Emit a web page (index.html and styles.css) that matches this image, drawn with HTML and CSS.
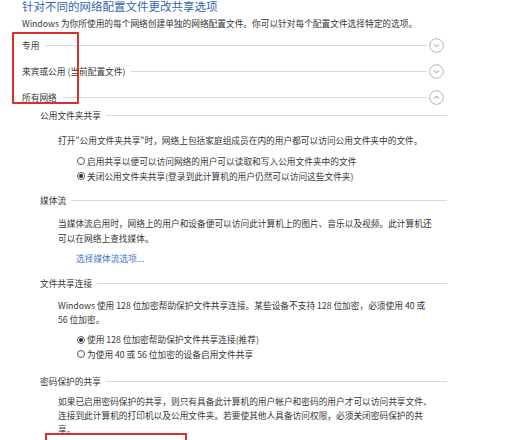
FILE: index.html
```html
<!DOCTYPE html>
<html lang="zh-CN">
<head>
<meta charset="utf-8">
<title>高级共享设置</title>
<link rel="stylesheet" href="styles.css">
</head>
<body>
<div class="page">
  <h1 class="title">针对不同的网络配置文件更改共享选项</h1>
  <p class="desc">Windows 为你所使用的每个网络创建单独的网络配置文件。你可以针对每个配置文件选择特定的选项。</p>

  <div class="profiles">
    <div class="profile first">
      <span class="label">专用</span><span class="rule"></span>
      <span class="toggle"><svg viewBox="0 0 15 15" width="15" height="15"><circle cx="7.5" cy="7.5" r="6.8" fill="none" stroke="#b4b4b4" stroke-width="1"/><path d="M5 6.4 L7.5 8.9 L10 6.4" fill="none" stroke="#8a8a8a" stroke-width="1"/></svg></span>
    </div>
    <div class="profile">
      <span class="label">来宾或公用 (当前配置文件)</span><span class="rule"></span>
      <span class="toggle"><svg viewBox="0 0 15 15" width="15" height="15"><circle cx="7.5" cy="7.5" r="6.8" fill="none" stroke="#b4b4b4" stroke-width="1"/><path d="M5 6.4 L7.5 8.9 L10 6.4" fill="none" stroke="#8a8a8a" stroke-width="1"/></svg></span>
    </div>
    <div class="profile">
      <span class="label">所有网络</span><span class="rule"></span>
      <span class="toggle"><svg viewBox="0 0 15 15" width="15" height="15"><circle cx="7.5" cy="7.5" r="6.8" fill="none" stroke="#b4b4b4" stroke-width="1"/><path d="M5 8.6 L7.5 6.1 L10 8.6" fill="none" stroke="#8a8a8a" stroke-width="1"/></svg></span>
    </div>
  </div>

  <div class="sections">
    <div class="sec-head s1"><span class="label">公用文件夹共享</span><span class="rule"></span></div>
    <p class="para p1">打开"公用文件夹共享"时，网络上包括家庭组成员在内的用户都可以访问公用文件夹中的文件。</p>
    <div class="radio r1"><span class="dot"></span><span>启用共享以便可以访问网络的用户可以读取和写入公用文件夹中的文件</span></div>
    <div class="radio"><span class="dot on"></span><span>关闭公用文件夹共享(登录到此计算机的用户仍然可以访问这些文件夹)</span></div>

    <div class="sec-head s2"><span class="label">媒体流</span><span class="rule"></span></div>
    <p class="para p2">当媒体流启用时，网络上的用户和设备便可以访问此计算机上的图片、音乐以及视频。此计算机还<br>可以在网络上查找媒体。</p>
    <a class="link">选择媒体流选项...</a>

    <div class="sec-head s3"><span class="label">文件共享连接</span><span class="rule"></span></div>
    <p class="para p3">Windows 使用 128 位加密帮助保护文件共享连接。某些设备不支持 128 位加密，必须使用 40 或<br>56 位加密。</p>
    <div class="radio r3"><span class="dot on"></span><span>使用 128 位加密帮助保护文件共享连接(推荐)</span></div>
    <div class="radio r4"><span class="dot"></span><span>为使用 40 或 56 位加密的设备启用文件共享</span></div>

    <div class="sec-head s4"><span class="label">密码保护的共享</span><span class="rule"></span></div>
    <p class="para p4">如果已启用密码保护的共享，则只有具备此计算机的用户帐户和密码的用户才可以访问共享文件、<br>连接到此计算机的打印机以及公用文件夹。若要使其他人具备访问权限，必须关闭密码保护的共<br>享。</p>
  </div>

  <span class="mark mark1"></span>
  <span class="mark mark2"></span>
</div>
</body>
</html>
```

FILE: styles.css
```css
html, body {
  margin: 0;
  padding: 0;
  background: #ffffff;
  overflow: hidden;
}

body {
  width: 530px;
  height: 440px;
  font-family: "Noto Sans CJK SC", "Microsoft YaHei", sans-serif;
  font-size: 8.7px;
  color: #363636;
}

.page {
  position: relative;
  display: flow-root;
  box-sizing: border-box;
  padding-left: 22px;
  height: 440px;
  overflow: hidden;
}

.title {
  margin: 0;
  font-size: 11.5px;
  font-weight: normal;
  line-height: 13px;
  color: #3466ae;
}

.desc {
  margin: 3px 0 0;
  line-height: 15px;
}

.profiles {
  width: 422px;
}

.profile {
  display: flex;
  align-items: center;
  height: 15px;
  margin-top: 10.75px;
}

.profile.first {
  margin-top: 7px;
}

.label {
  white-space: nowrap;
  line-height: 15px;
}

.rule {
  flex: 1;
  height: 1px;
  background: #dadada;
  margin-left: 6px;
}

.toggle {
  display: flex;
  margin-left: 2px;
}

.sections {
  padding-left: 18px;
  width: 407px;
}

.sec-head {
  display: flex;
  align-items: center;
  height: 15px;
}

.sec-head .rule {
  margin-left: 5px;
}

.s1 { margin-top: 3px; }
.s2 { margin-top: 9px; }
.s3 { margin-top: 10px; }
.s4 { margin-top: 12.5px; }

.para {
  margin: 0;
  padding-left: 18px;
  line-height: 15px;
  white-space: nowrap;
}

.p1 { margin-top: 10px; }
.p2 { margin-top: 8px; }
.p3 { margin-top: 8px; line-height: 14.5px; }
.p4 { margin-top: 5.5px; line-height: 14px; }

.radio {
  display: flex;
  align-items: center;
  gap: 2px;
  padding-left: 37px;
  height: 15px;
  white-space: nowrap;
}

.r1 { margin-top: 6px; }
.r3 { margin-top: 5px; height: 14.5px; }
.r4 { height: 14.5px; }

.dot {
  box-sizing: border-box;
  width: 8px;
  height: 8px;
  border: 1px solid #5a5a5a;
  border-radius: 50%;
  display: flex;
  align-items: center;
  justify-content: center;
  flex: none;
}

.dot.on::after {
  content: "";
  width: 4px;
  height: 4px;
  border-radius: 50%;
  background: #2a2a2a;
}

.link {
  display: block;
  margin-top: 5px;
  padding-left: 36px;
  line-height: 15px;
  color: #3a78c6;
}

.mark {
  position: absolute;
  box-sizing: border-box;
  border: 2px solid #d8302e;
  border-radius: 1px;
}

.mark1 {
  left: 12px;
  top: 32px;
  width: 67px;
  height: 72px;
}

.mark2 {
  left: 45px;
  top: 433px;
  width: 142px;
  height: 7px;
  border-bottom: none;
  border-radius: 1px 1px 0 0;
}
```
